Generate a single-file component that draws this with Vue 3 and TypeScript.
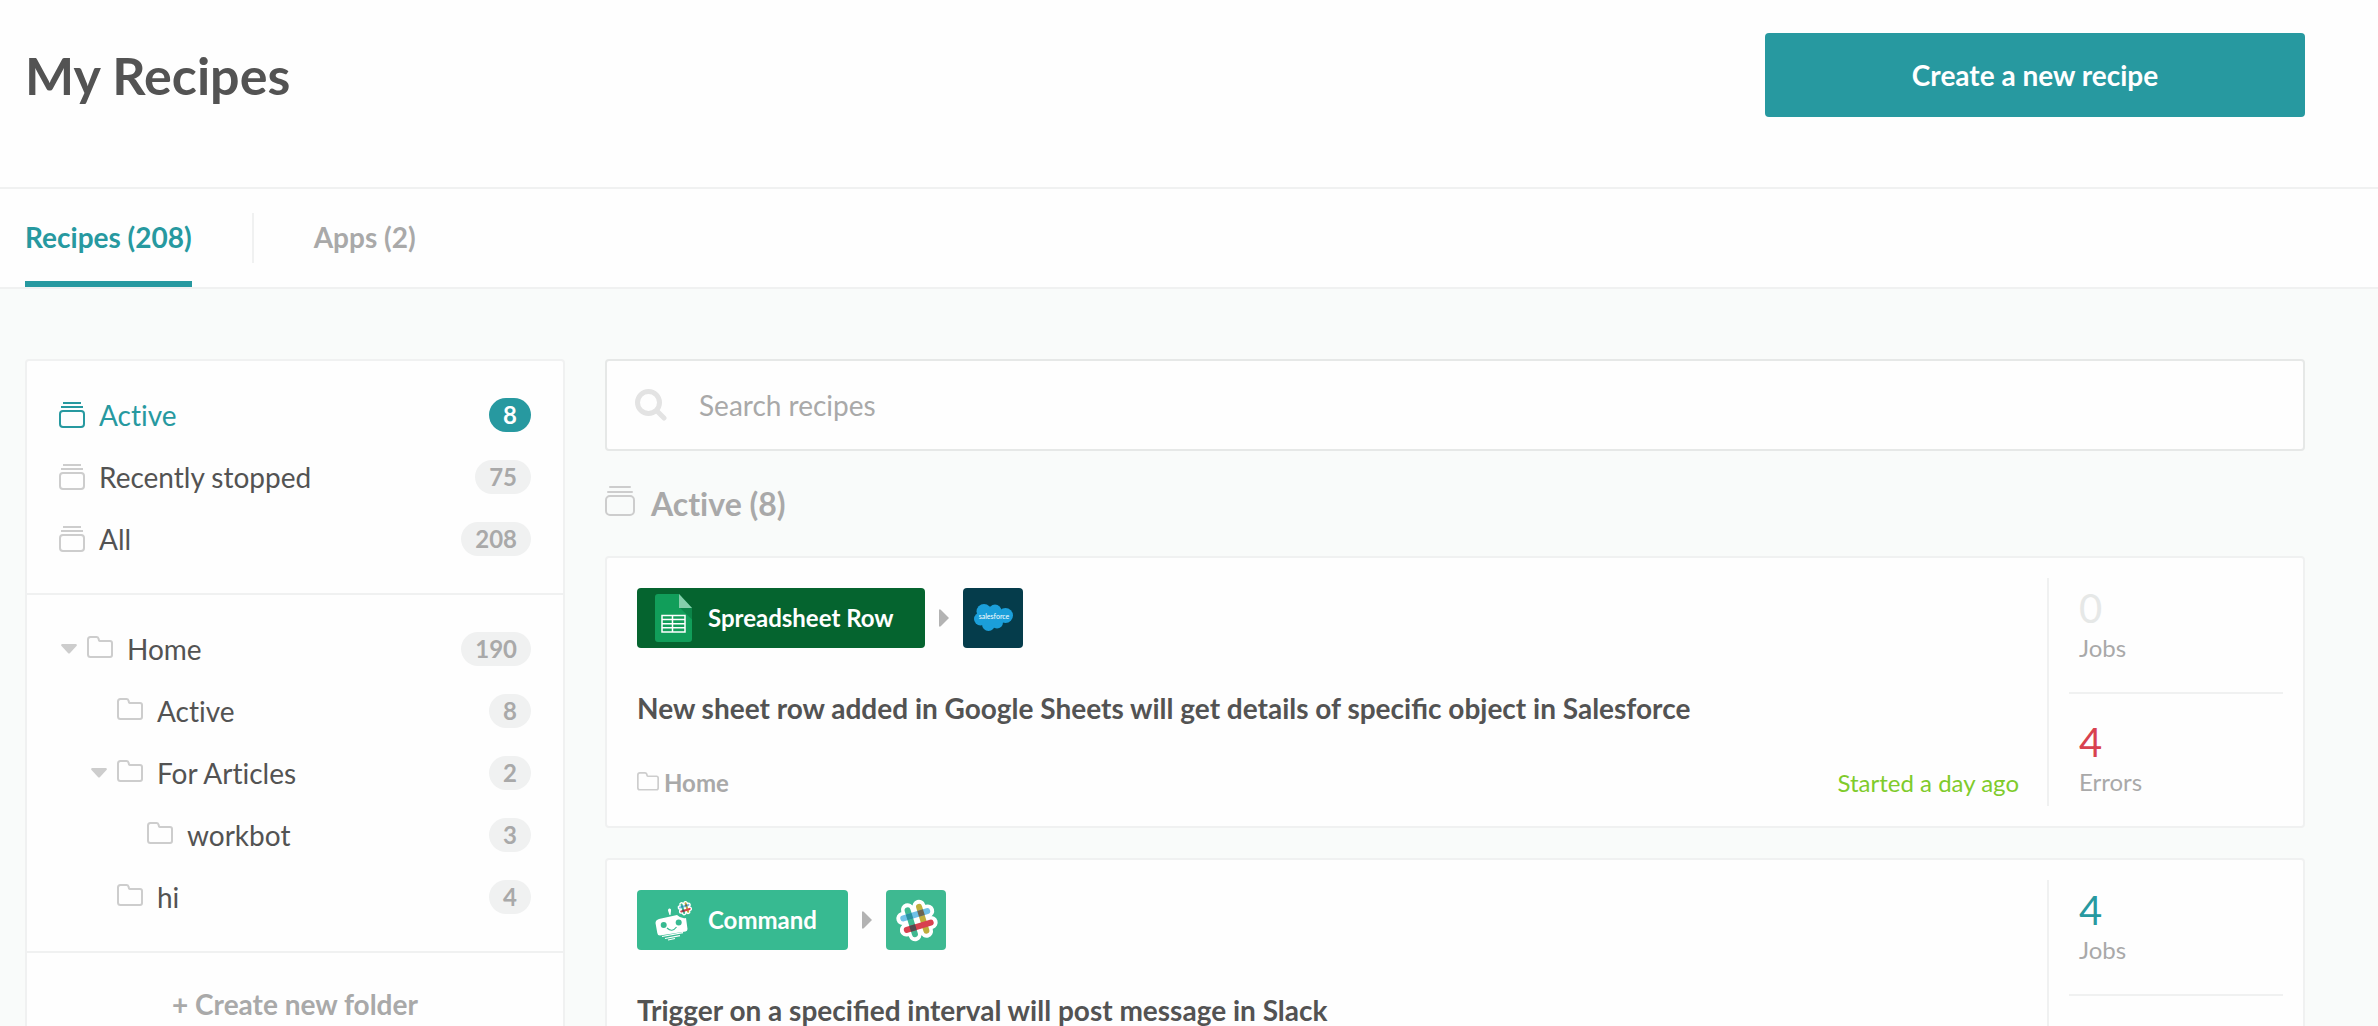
<script setup lang="ts">
import { ref } from 'vue'

interface Filter {
  label: string
  count: number
}

interface Folder {
  label: string
  count: number
  level: number
  open?: boolean
}

interface Stat {
  value: number
  label: string
  tone: 'none' | 'ok' | 'bad'
}

interface Recipe {
  trigger: string
  icon: 'sheets' | 'workbot'
  target: 'salesforce' | 'slack'
  title: string
  folder?: string
  status?: string
  stats: Stat[]
}

const search = ref('')
const activeFilter = ref('Active')

const filters: Filter[] = [
  { label: 'Active', count: 8 },
  { label: 'Recently stopped', count: 75 },
  { label: 'All', count: 208 },
]

const folders: Folder[] = [
  { label: 'Home', count: 190, level: 0, open: true },
  { label: 'Active', count: 8, level: 1 },
  { label: 'For Articles', count: 2, level: 1, open: true },
  { label: 'workbot', count: 3, level: 2 },
  { label: 'hi', count: 4, level: 1 },
]

const recipes: Recipe[] = [
  {
    trigger: 'Spreadsheet Row',
    icon: 'sheets',
    target: 'salesforce',
    title: 'New sheet row added in Google Sheets will get details of specific object in Salesforce',
    folder: 'Home',
    status: 'Started a day ago',
    stats: [
      { value: 0, label: 'Jobs', tone: 'none' },
      { value: 4, label: 'Errors', tone: 'bad' },
    ],
  },
  {
    trigger: 'Command',
    icon: 'workbot',
    target: 'slack',
    title: 'Trigger on a specified interval will post message in Slack',
    stats: [{ value: 4, label: 'Jobs', tone: 'ok' }],
  },
]
</script>

<template>
  <div class="page">
    <!-- Shared symbols -->
    <svg class="defs" width="0" height="0" aria-hidden="true">
      <symbol id="stack" viewBox="0 0 26 26">
        <path d="M4 1h18M2 5h22" stroke="currentColor" stroke-width="2" fill="none" />
        <rect x="1" y="9" width="24" height="16" rx="3" stroke="currentColor" stroke-width="2" fill="none" />
      </symbol>
      <symbol id="folder" viewBox="0 0 26 26">
        <path
          d="M3.5 1H9.500Q11 1 11.500 2.500L12 4.500Q12.300 5 13 5H23Q25 5 25 7V19Q25 21 23 21H3.500Q1 21 1 18.500V3.500Q1 1 3.500 1Z"
          stroke="currentColor" stroke-width="2" fill="none" stroke-linejoin="round"
        />
      </symbol>
      <symbol id="hash" viewBox="0 0 60 60">
        <g transform="rotate(-17 31 30.500)" stroke-linecap="round" fill="none">
          <path d="M18 24.500H44M18 36.500H44M25 17.500V43.500M37 17.500V43.500" stroke="#fff" stroke-width="13" />
          <path d="M25 18V43" stroke="#3eb991" stroke-width="6" />
          <path d="M37 18V43" stroke="#bfae3c" stroke-width="6" />
          <path d="M18.500 24.500H43.500" stroke="#70c1e8" stroke-width="6" />
          <path d="M18.500 36.500H43.500" stroke="#d8414f" stroke-width="6" />
          <path d="M22 21.500h6v6h-6z" fill="#2a919e" />
          <path d="M34 21.500h6v6h-6z" fill="#6c6552" />
          <path d="M22 33.500h6v6h-6z" fill="#544b50" />
        </g>
      </symbol>
    </svg>

    <header class="header">
      <h1>My Recipes</h1>
      <button type="button" class="create">Create a new recipe</button>
    </header>

    <nav class="tabs">
      <a href="#recipes" class="tab current">Recipes (208)</a>
      <span class="tab-rule"></span>
      <a href="#apps" class="tab">Apps (2)</a>
    </nav>

    <div class="body">
      <aside class="sidebar">
        <ul class="group">
          <li v-for="f in filters" :key="f.label">
            <a href="#filter" class="row" :class="{ selected: f.label === activeFilter }" @click.prevent="activeFilter = f.label">
              <svg class="icon"><use href="#stack" /></svg>
              <span class="name">{{ f.label }}</span>
              <span class="count">{{ f.count }}</span>
            </a>
          </li>
        </ul>
        <ul class="group">
          <li v-for="(f, i) in folders" :key="i">
            <a href="#folder" class="row" :style="{ paddingLeft: 32 + f.level * 30 + 'px' }">
              <span class="caret">
                <svg v-if="f.open" width="16" height="10" viewBox="0 0 16 10">
                  <path d="M1 0h14q1.500.500.500 2L9 9q-1 1-2 0L.500 2Q-.500.500 1 0z" fill="currentColor" />
                </svg>
              </span>
              <svg class="icon"><use href="#folder" /></svg>
              <span class="name">{{ f.label }}</span>
              <span class="count">{{ f.count }}</span>
            </a>
          </li>
        </ul>
        <button type="button" class="new-folder">+ Create new folder</button>
      </aside>

      <main class="main">
        <div class="search">
          <label for="search" aria-label="Search">
            <svg width="32" height="32" viewBox="0 0 32 32">
              <circle cx="13.500" cy="13.500" r="11" fill="none" stroke="currentColor" stroke-width="5" />
              <path d="M22 22l7 7" stroke="currentColor" stroke-width="5" stroke-linecap="round" />
            </svg>
          </label>
          <input id="search" v-model="search" type="text" placeholder="Search recipes" />
        </div>

        <h2 class="heading">
          <svg width="30" height="30" viewBox="0 0 30 30" fill="none" stroke="currentColor" stroke-width="2">
            <path d="M5 1h20M3 6h24" stroke-linecap="round" />
            <rect x="1" y="10" width="28" height="19" rx="4" />
          </svg>
          Active (8)
        </h2>

        <article v-for="r in recipes" :key="r.title" class="card">
          <div class="info">
            <div class="flow">
              <span class="chip" :class="r.icon">
                <svg v-if="r.icon === 'sheets'" width="71" height="60" viewBox="0 0 71 60">
                  <path d="M21 6H42L55 20V51Q55 54 52 54H21Q18 54 18 51V9Q18 6 21 6Z" fill="#119e5a" />
                  <path d="M43 20H55V31.500Z" fill="#0c8549" />
                  <path d="M42 6L55 20H42Z" fill="#86ceab" />
                  <path d="M25 27.500H48V44H25ZM25 31.600H48M25 35.700H48M25 39.800H48M35.500 27.500V44" fill="none" stroke="#fff" stroke-width="1.500" />
                </svg>
                <svg v-else width="71" height="60" viewBox="0 0 71 60">
                  <path d="M22 29L40 25Q44 29 49 28L50.500 39Q50.500 41 48.500 41.500L23 45.500Q20.500 45.500 20.300 43L18.500 33Q18.500 30 22 29Z" fill="#fff" />
                  <path d="M31 20.500Q31 18 33 18.500Q34.500 19 34 21L33.500 25H32.500Z" fill="#fff" />
                  <circle cx="26.700" cy="35" r="3" fill="#37ba91" />
                  <circle cx="41.700" cy="32.500" r="3" fill="#37ba91" />
                  <path d="M30 38Q35 43 39.500 37" fill="none" stroke="#37ba91" stroke-width="1.200" />
                  <path d="M25 46.500L46 42.700M28 48.500L43 45.700M31 50L38 48.500" stroke="#fff" stroke-width="1.200" fill="none" />
                  <use href="#hash" x="37" y="7.500" width="21" height="21" />
                </svg>
                {{ r.trigger }}
              </span>
              <svg class="arrow" width="10" height="18" viewBox="0 0 10 18">
                <path d="M0 1Q.500-.500 2 1L10 9L2 17Q.500 18.500 0 17Z" fill="currentColor" />
              </svg>
              <span class="target" :class="r.target">
                <svg v-if="r.target === 'salesforce'" width="60" height="60" viewBox="0 0 60 60">
                  <g fill="#1b9fda">
                    <circle cx="21" cy="23.500" r="7.500" />
                    <circle cx="32" cy="23" r="6.500" />
                    <circle cx="42.500" cy="27.500" r="7.500" />
                    <circle cx="17.500" cy="31" r="6.500" />
                    <circle cx="25.500" cy="36.500" r="6.500" />
                    <circle cx="34" cy="34.500" r="6" />
                    <circle cx="29" cy="29" r="8" />
                  </g>
                  <text x="31" y="31" text-anchor="middle" fill="#fff" font-size="7">salesforce</text>
                </svg>
                <svg v-else width="60" height="60"><use href="#hash" /></svg>
              </span>
            </div>
            <h3>{{ r.title }}</h3>
            <div class="foot">
              <a v-if="r.folder" href="#home" class="place">
                <svg width="22" height="22"><use href="#folder" /></svg>
                {{ r.folder }}
              </a>
              <span class="status">{{ r.status }}</span>
            </div>
          </div>
          <dl class="stats">
            <div v-for="s in r.stats" :key="s.label" class="stat">
              <dd :class="s.tone">{{ s.value }}</dd>
              <dt>{{ s.label }}</dt>
            </div>
          </dl>
        </article>
      </main>
    </div>
  </div>
</template>

<style>
body {
  margin: 0;
}
</style>

<style scoped>
* {
  box-sizing: border-box;
}

.page {
  height: 100vh;
  overflow: hidden;
  background: #f9fbfa;
  color: #535353;
  font: 28px/40px Lato, "Liberation Sans", sans-serif;
  font-variant-ligatures: none;
}

.defs {
  display: block;
}

h1,
h2,
h3,
ul,
dl,
dd {
  margin: 0;
  padding: 0;
}

ul {
  list-style: none;
}

a {
  color: inherit;
  text-decoration: none;
}

button {
  border: 0;
  font: inherit;
  font-weight: 700;
  cursor: pointer;
}

svg {
  display: block;
  flex: none;
}

.header {
  display: flex;
  align-items: center;
  justify-content: space-between;
  padding: 33px 73px 70px 25px;
  background: #fefefe;
  border-bottom: 2px solid #f0f1f1;
}

h1 {
  font-size: 52px;
  line-height: 60px;
}

.create {
  width: 540px;
  height: 84px;
  border-radius: 4px;
  background: #2799a0;
  color: #fff;
}

.tabs {
  display: flex;
  align-items: center;
  padding: 0 25px;
  background: #fefefe;
  border-bottom: 2px solid #f0f1f1;
  color: #a9a9a9;
  font-weight: 700;
}

.tab {
  height: 98px;
  line-height: 96px;
}

.current {
  color: #2799a0;
  box-shadow: inset 0 -6px #2799a0;
}

.tab-rule {
  width: 2px;
  height: 50px;
  margin: 0 60px;
  background: #f0f1f1;
}

.body {
  display: flex;
  align-items: flex-start;
  gap: 40px;
  padding: 70px 73px 70px 25px;
}

.sidebar {
  flex: none;
  width: 540px;
  background: #fefefe;
  border: 2px solid #f0f1f1;
  border-radius: 4px;
}

.group {
  padding: 23px 0;
  border-bottom: 2px solid #f0f1f1;
}

.row {
  display: flex;
  align-items: center;
  height: 62px;
  padding: 0 32px;
}

.icon {
  width: 26px;
  height: 26px;
  margin-right: 14px;
  color: #cdcdcd;
}

.caret {
  width: 28px;
  padding-left: 2px;
  color: #cdcdcd;
}

.name {
  flex: 1;
}

.count {
  padding: 0 14px;
  border-radius: 17px;
  background: #f0f1f1;
  color: #a9a9a9;
  font-size: 24px;
  font-weight: 700;
  line-height: 34px;
}

.selected,
.selected .icon {
  color: #2799a0;
}

.selected .count {
  background: #2799a0;
  color: #fff;
}

.new-folder {
  width: 100%;
  height: 102px;
  background: none;
  color: #a9a9a9;
}

.main {
  flex: 1;
  min-width: 0;
}

.search {
  display: flex;
  align-items: center;
  height: 92px;
  padding: 0 28px;
  background: #fefefe;
  border: 2px solid #e6e8e7;
  border-radius: 4px;
}

.search label {
  color: #e3e3e3;
}

.search input {
  flex: 1;
  height: 60px;
  margin-left: 32px;
  padding: 0;
  border: 0;
  outline: 0;
  background: none;
  color: inherit;
  font: inherit;
}

.search input::placeholder {
  color: #a9a9a9;
  opacity: 1;
}

.heading {
  display: flex;
  align-items: center;
  gap: 16px;
  padding: 33px 0 32px;
  color: #a9a9a9;
  font-size: 32px;
}

.heading svg {
  margin-bottom: 6px;
  color: #cdcdcd;
}

.card {
  display: flex;
  margin-bottom: 30px;
  background: #fefefe;
  border: 2px solid #f0f1f1;
  border-radius: 4px;
}

.info {
  flex: 1;
  min-width: 0;
  padding: 30px 28px 28px 30px;
}

.flow {
  display: flex;
  align-items: center;
  gap: 14px;
}

.chip {
  display: flex;
  padding-right: 31px;
  border-radius: 4px;
  color: #fff;
  font-size: 24px;
  font-weight: 700;
  line-height: 60px;
}

.sheets {
  background: #05642f;
}

.workbot {
  background: #37ba91;
}

.arrow {
  color: #b3b3b3;
}

.target {
  border-radius: 4px;
}

.salesforce {
  background: #053c4b;
}

.slack {
  background: #3eb991;
}

h3 {
  margin: 40px 0;
  font-size: 28px;
  font-variant-ligatures: normal;
}

.foot {
  display: flex;
  justify-content: space-between;
  min-height: 30px;
  font-size: 24px;
  line-height: 30px;
}

.place {
  display: flex;
  align-items: center;
  gap: 5px;
  color: #a9a9a9;
  font-weight: 700;
}

.place svg {
  color: #cdcdcd;
}

.status {
  color: #7fcb2b;
}

.stats {
  width: 256px;
  margin: 20px 0;
  padding: 0 20px;
  border-left: 2px solid #f0f1f1;
}

.stat {
  display: flex;
  flex-direction: column;
  gap: 5px;
  height: 116px;
  padding: 10px;
  border-bottom: 2px solid #f0f1f1;
}

.stat + .stat {
  height: auto;
  padding-top: 28px;
  padding-bottom: 0;
  border: 0;
}

dd {
  font-size: 40px;
  line-height: 40px;
}

dt {
  color: #a9a9a9;
  font-size: 24px;
  line-height: 30px;
}

.none {
  color: #e6e8e7;
}

.ok {
  color: #2799a0;
}

.bad {
  color: #d8414f;
}
</style>
